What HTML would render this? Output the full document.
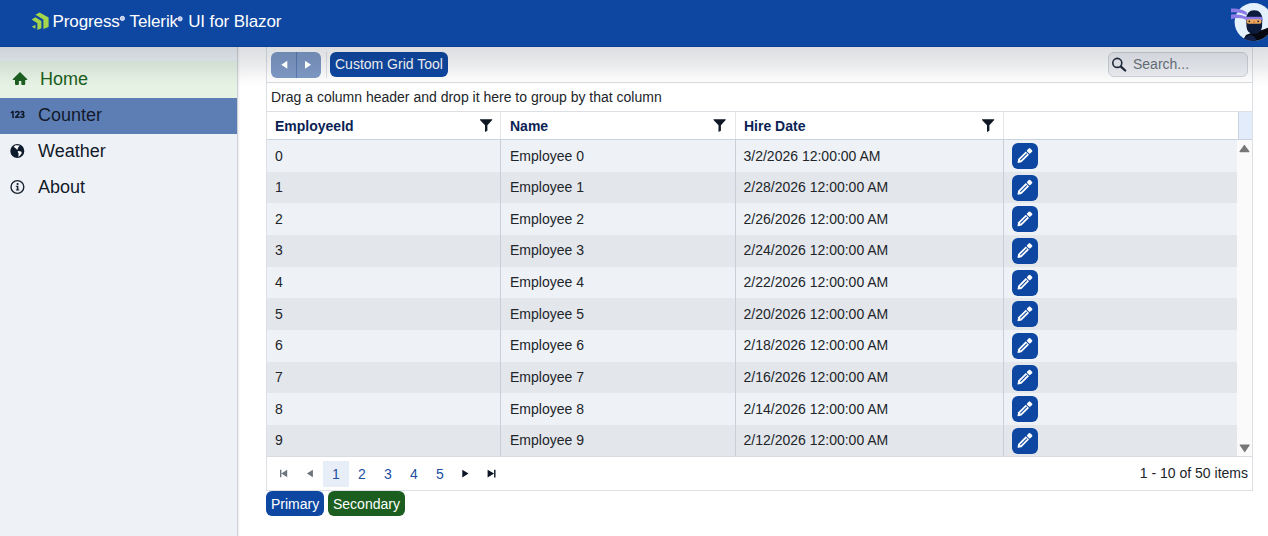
<!DOCTYPE html>
<html><head><meta charset="utf-8">
<style>
*{box-sizing:border-box;margin:0;padding:0}
html,body{width:1268px;height:536px;overflow:hidden;background:#fff;font-family:"Liberation Sans",sans-serif;font-size:14px;color:#212529}
#hdr{position:absolute;left:0;top:0;width:1268px;height:47px;background:#0e47a1;z-index:5;border-bottom:1px solid #0a3f94}
#hdr .logo{position:absolute;left:31px;top:12px;width:18px;height:19px}
#hdr .title{position:absolute;left:52.5px;top:12px;font-size:17px;line-height:20px;color:#fff;white-space:nowrap;letter-spacing:-0.1px}
#hdr .title sup{font-size:7.5px;vertical-align:top;position:relative;top:-1.5px;margin-left:0px;letter-spacing:0;color:transparent}
#avatar{position:absolute;left:1234px;top:3px;width:38px;height:38px;border-radius:50%;background:#dff0fb;overflow:hidden}
#shadow{position:absolute;left:0;top:47px;width:1268px;height:40px;background:linear-gradient(rgba(10,20,40,.14),rgba(10,20,40,.11) 10px,rgba(10,20,40,.075) 20px,rgba(10,20,40,.04) 28px,rgba(10,20,40,.015) 34px,rgba(10,20,40,0) 40px);z-index:4;pointer-events:none}
#side{position:absolute;left:0;top:47px;width:238px;height:489px;background:#eef2f7;border-right:1px solid #cdd1d7;box-shadow:1px 0 2px rgba(0,0,0,.07)}
.nav{position:absolute;left:0;width:237px;height:36px;font-size:18px;line-height:36px;color:#131a2a}
.nav .ic{position:absolute;left:11px;top:11px;width:16px;height:14px}
.nav span.t{position:absolute;left:38px;top:0}
#n-home{top:14px;height:37px;background:#e6f3e4;color:#1b5e20}
#n-home span.t{left:40px}
#n-counter span.t{top:-1px}
#n-counter{top:51px;background:#5d7eb5}
#n-weather{top:86px}
#n-about{top:122px}
#grid{position:absolute;left:266px;top:47px;width:987px;height:444px;border:1px solid #dcdfe4;border-top:none;background:#fff}
#tb{position:absolute;left:0;top:0;width:985px;height:36px;border-bottom:1px solid #dadde2}
.bgrp{position:absolute;left:4px;top:5px;width:50px;height:26px;border-radius:6px;background:#7f9ac7;overflow:hidden}
.bgrp .div{position:absolute;left:25px;top:0;width:1px;height:26px;background:#5a7ab0}
.sep{position:absolute;left:59px;top:5px;width:1px;height:26px;background:#e2e4e8}
.btn{position:absolute;height:25px;border-radius:6px;color:#fff;line-height:26px;padding:0 5px;white-space:nowrap}
#cgt{left:63px;top:5px;width:118px;background:#0e47a1;padding:0 4px 0 5px;line-height:25px}
#search{position:absolute;left:841px;top:5px;width:140px;height:25px;border:1px solid #cfd4da;border-radius:6px;background:#eef0f4;color:#6c757d;line-height:23px}
#search span{position:absolute;left:24px;top:0}
#grp{position:absolute;left:0;top:36px;width:985px;height:29px;border-bottom:1px solid #dcdfe4;line-height:27px;padding-left:4px;padding-top:1px;color:#212529}
#ghead{position:absolute;left:0;top:65px;width:985px;height:28px;border-bottom:1px solid #c9d3df;background:#fff}
.hc{position:absolute;top:0;height:27px;line-height:27px;padding-top:1px;font-weight:bold;color:#0b1f54;padding-left:8px;border-right:1px solid #e4e6ea}
.hc .f{position:absolute;top:7px;width:13px;height:13px}
#hsb{position:absolute;left:971px;top:0;width:14px;height:27px;background:#e2ecfa;border-left:1px solid #c9d3df}
#body{position:absolute;left:0;top:93px;width:970px;height:316px;overflow:hidden}
.row{position:absolute;left:0;width:970px;height:31.65px;background:#eef2f7}
.row.alt{background:#e3e6eb}
.c{position:absolute;top:0;height:100%;line-height:31.65px;padding-left:8px;padding-top:0.5px;border-right:1px solid #cacfd6}
.eb{position:absolute;left:8px;top:3px;width:26px;height:26px;border-radius:6px;background:#0e47a1}
#vsb{position:absolute;left:970px;top:93px;width:15px;height:316px;background:#fafafa}
#pager{position:absolute;left:0;top:409px;width:985px;height:34px;border-top:1px solid #d9dce1}
.pg{position:absolute;top:4px;height:26px;width:26px;text-align:center;line-height:26px;color:#1d4f9f}
.pg.sel{background:#e8eef7}
#pinfo{position:absolute;right:4px;top:0;line-height:33px;color:#212529}
#prim{left:266px;top:491px;width:58px;background:#0e47a1}
#sec{left:328px;top:491px;width:77px;background:#1b5e20}
</style></head><body>
<div id="hdr">
  
  <div class="title">Progress<sup>®</sup> Telerik<sup>®</sup> UI for Blazor</div>
  
</div>
<div id="shadow"></div>
<div id="side">
  <div class="nav" id="n-home"><span class="t">Home</span></div>
  <div class="nav" id="n-counter"><span class="t">Counter</span></div>
  <div class="nav" id="n-weather"><span class="t">Weather</span></div>
  <div class="nav" id="n-about"><span class="t">About</span></div>
</div>
<div id="grid">
  <div id="tb">
    <div class="bgrp"><div class="div"></div></div>
    <div class="sep"></div>
    <div class="btn" id="cgt">Custom Grid Tool</div>
    <div id="search"><span>Search...</span></div>
  </div>
  <div id="grp">Drag a column header and drop it here to group by that column</div>
  <div id="ghead">
    <div class="hc" style="left:0;width:234px">EmployeeId</div>
    <div class="hc" style="left:234px;width:235px;padding-left:9px">Name</div>
    <div class="hc" style="left:469px;width:268px">Hire Date</div>
    <div class="hc" style="left:737px;width:233px;border-right:none"></div>
    <div id="hsb"></div>
  </div>
  <div id="body">
<div class="row" style="top:0.00px"><div class="c" style="left:0;width:234px">0</div><div class="c" style="left:234px;width:235px;padding-left:9px">Employee 0</div><div class="c" style="left:469px;width:268px;padding-left:7.5px">3/2/2026 12:00:00 AM</div><div class="c" style="left:737px;width:233px;border-right:none"><div class="eb"></div></div></div>
<div class="row alt" style="top:31.65px"><div class="c" style="left:0;width:234px">1</div><div class="c" style="left:234px;width:235px;padding-left:9px">Employee 1</div><div class="c" style="left:469px;width:268px;padding-left:7.5px">2/28/2026 12:00:00 AM</div><div class="c" style="left:737px;width:233px;border-right:none"><div class="eb"></div></div></div>
<div class="row" style="top:63.30px"><div class="c" style="left:0;width:234px">2</div><div class="c" style="left:234px;width:235px;padding-left:9px">Employee 2</div><div class="c" style="left:469px;width:268px;padding-left:7.5px">2/26/2026 12:00:00 AM</div><div class="c" style="left:737px;width:233px;border-right:none"><div class="eb"></div></div></div>
<div class="row alt" style="top:94.95px"><div class="c" style="left:0;width:234px">3</div><div class="c" style="left:234px;width:235px;padding-left:9px">Employee 3</div><div class="c" style="left:469px;width:268px;padding-left:7.5px">2/24/2026 12:00:00 AM</div><div class="c" style="left:737px;width:233px;border-right:none"><div class="eb"></div></div></div>
<div class="row" style="top:126.60px"><div class="c" style="left:0;width:234px">4</div><div class="c" style="left:234px;width:235px;padding-left:9px">Employee 4</div><div class="c" style="left:469px;width:268px;padding-left:7.5px">2/22/2026 12:00:00 AM</div><div class="c" style="left:737px;width:233px;border-right:none"><div class="eb"></div></div></div>
<div class="row alt" style="top:158.25px"><div class="c" style="left:0;width:234px">5</div><div class="c" style="left:234px;width:235px;padding-left:9px">Employee 5</div><div class="c" style="left:469px;width:268px;padding-left:7.5px">2/20/2026 12:00:00 AM</div><div class="c" style="left:737px;width:233px;border-right:none"><div class="eb"></div></div></div>
<div class="row" style="top:189.90px"><div class="c" style="left:0;width:234px">6</div><div class="c" style="left:234px;width:235px;padding-left:9px">Employee 6</div><div class="c" style="left:469px;width:268px;padding-left:7.5px">2/18/2026 12:00:00 AM</div><div class="c" style="left:737px;width:233px;border-right:none"><div class="eb"></div></div></div>
<div class="row alt" style="top:221.55px"><div class="c" style="left:0;width:234px">7</div><div class="c" style="left:234px;width:235px;padding-left:9px">Employee 7</div><div class="c" style="left:469px;width:268px;padding-left:7.5px">2/16/2026 12:00:00 AM</div><div class="c" style="left:737px;width:233px;border-right:none"><div class="eb"></div></div></div>
<div class="row" style="top:253.20px"><div class="c" style="left:0;width:234px">8</div><div class="c" style="left:234px;width:235px;padding-left:9px">Employee 8</div><div class="c" style="left:469px;width:268px;padding-left:7.5px">2/14/2026 12:00:00 AM</div><div class="c" style="left:737px;width:233px;border-right:none"><div class="eb"></div></div></div>
<div class="row alt" style="top:284.85px"><div class="c" style="left:0;width:234px">9</div><div class="c" style="left:234px;width:235px;padding-left:9px">Employee 9</div><div class="c" style="left:469px;width:268px;padding-left:7.5px">2/12/2026 12:00:00 AM</div><div class="c" style="left:737px;width:233px;border-right:none"><div class="eb"></div></div></div>
</div>
  <div id="vsb"></div>
  <div id="pager">
    <div class="pg sel" style="left:56px">1</div>
    <div class="pg" style="left:82px">2</div>
    <div class="pg" style="left:108px">3</div>
    <div class="pg" style="left:134px">4</div>
    <div class="pg" style="left:160px">5</div>
    <div id="pinfo">1 - 10 of 50 items</div>
  </div>
</div>
<div class="btn" id="prim">Primary</div>
<div class="btn" id="sec">Secondary</div>

<svg id="ov" width="1268" height="536" viewBox="0 0 1268 536" style="position:absolute;left:0;top:0;z-index:10;pointer-events:none">
<defs><clipPath id="avc"><circle cx="1253.6" cy="22" r="19"/></clipPath></defs>
<circle cx="1253.6" cy="22" r="19" fill="#e3f2fc"/>
<g clip-path="url(#avc)">
<path fill="#05080f" d="M1240 45 L1246 35 Q1254 31 1262 30 L1270 27 L1270 45 Z"/>
<path fill="#14224a" d="M1241 45 Q1243 36.5 1250 35 Q1256 34.5 1257.5 45 Z"/>
</g>
<path fill="#8c7ae6" d="M1231 8.6 Q1240 7.8 1246.8 12.2 L1246.8 15.6 Q1240 11.6 1231 12.4 Z M1231 14.4 Q1240 13.4 1247 17 L1247 20.2 Q1240 16.6 1231 19.2 Z"/>
<path fill="#0c1a3c" d="M1246.2 20 Q1246.2 10.3 1254.2 10.3 Q1262.3 10.3 1262.3 20 L1262 27 Q1261 34 1254.2 34 Q1247.2 34 1246.5 27 Z"/>
<rect x="1246" y="16.8" width="16.5" height="3.4" fill="#8c7ae6"/>
<rect x="1246.6" y="19.3" width="14.9" height="4.4" rx="2" fill="#e9a85c"/>
<circle cx="1249.3" cy="21.3" r="0.9" fill="#1a1a2e"/><circle cx="1258.2" cy="21.3" r="0.9" fill="#1a1a2e"/>
<rect x="1253.5" y="21.2" width="1.2" height="2" fill="#d9603b"/>
<circle cx="122.4" cy="18.4" r="2.1" fill="#b9c6ea" stroke="#f4f6ff" stroke-width="0.9"/><circle cx="180.1" cy="18.8" r="2.1" fill="#b9c6ea" stroke="#f4f6ff" stroke-width="0.9"/>
<polygon fill="#a3d64a" points="35.4,14.8 39.6,12.4 48.6,17.5 48.6,26.9 43.4,28.9 43.4,19.5"/><polygon fill="#a3d64a" points="31.6,19.5 35.4,17.3 41.4,20.9 41.4,28.3 37.4,30.0 37.4,23.3"/><polygon fill="#a3d64a" points="31.8,26.7 35.4,24.7 35.4,28.7"/>
<path fill="#1b5e20" d="M20 72 L27.3 79.3 Q27.6 80 26.6 80 L25.2 80 L25.2 84 Q25.2 85 24.2 85 L22.3 85 Q21.3 85 21.3 84 L21.3 81 L18.9 81 L18.9 84 Q18.9 85 17.9 85 L16 85 Q15 85 15 84 L15 80 L13.4 80 Q12.4 80 12.7 79.3 Z"/>
<g fill="none" stroke="#0f1a2b" stroke-width="1.5" stroke-linejoin="round"><path d="M10.8 113 L13 111.4 L13 118"/><path d="M15.4 112.9 Q15.7 111.4 17.3 111.4 Q19 111.4 19 112.8 Q19 114 17.6 115.1 L15.6 117.3 L19.6 117.3"/><path d="M20.6 112.6 Q21 111.4 22.3 111.4 Q23.8 111.4 23.8 112.8 Q23.8 114.3 22 114.4 Q24 114.5 24 116 Q24 117.4 22.2 117.4 Q20.8 117.4 20.4 116.3"/></g>
<circle cx="17.3" cy="151" r="7" fill="#0d1a2b"/><path fill="#fff" d="M13.6 146.7 L15.5 145.3 L19.8 145.6 L18 147.8 L17.3 149.9 L15.9 148.6 Z M17.8 150.9 L21.2 151.4 L21.8 153 L20 155.4 L18.4 157 L18.6 153.6 L17.9 152.2 Z"/>
<circle cx="17.4" cy="187" r="6.4" fill="none" stroke="#1a2230" stroke-width="1.4"/><circle cx="17.6" cy="184" r="1.1" fill="#1a2230"/><path fill="#1a2230" d="M15.8 185.8 L18.4 185.8 L18.4 189.6 L19.3 189.6 L19.3 190.6 L15.9 190.6 L15.9 189.6 L16.8 189.6 L16.8 186.8 L15.8 186.8 Z"/>
<path fill="#fff" d="M281.3 64.7 L287.3 60.8 L287.3 68.7 Z M311 64.7 L305 60.8 L305 68.7 Z"/>
<circle cx="1117.3" cy="62.9" r="4.5" fill="none" stroke="#1f2937" stroke-width="1.6"/><path d="M1120.9 66.6 L1125.2 70.5" stroke="#1f2937" stroke-width="2.3" stroke-linecap="round"/>
<path fill="#0f1724" transform="translate(480.0 119.2)" d="M0 0 L12.2 0 L12.2 0.9 L7.4 6 L7.4 11.5 L5 12.8 L5 6 L0 0.9 Z"/><path fill="#0f1724" transform="translate(713.5 119.2)" d="M0 0 L12.2 0 L12.2 0.9 L7.4 6 L7.4 11.5 L5 12.8 L5 6 L0 0.9 Z"/><path fill="#0f1724" transform="translate(982.0 119.2)" d="M0 0 L12.2 0 L12.2 0.9 L7.4 6 L7.4 11.5 L5 12.8 L5 6 L0 0.9 Z"/>
<g transform="translate(1024.5 156.00) rotate(-45)"><path fill="#fff" d="M-9.6 0.3 L-9.6 -0.3 L-6.6 -2.3 L4.1 -2.3 L4.1 2.3 L-6.6 2.3 Z"/><rect x="-5.9" y="-0.55" width="9.2" height="1.1" fill="#0e47a1"/><rect x="5.1" y="-2.3" width="4.3" height="4.6" rx="1" fill="#fff"/></g><g transform="translate(1024.5 187.65) rotate(-45)"><path fill="#fff" d="M-9.6 0.3 L-9.6 -0.3 L-6.6 -2.3 L4.1 -2.3 L4.1 2.3 L-6.6 2.3 Z"/><rect x="-5.9" y="-0.55" width="9.2" height="1.1" fill="#0e47a1"/><rect x="5.1" y="-2.3" width="4.3" height="4.6" rx="1" fill="#fff"/></g><g transform="translate(1024.5 219.30) rotate(-45)"><path fill="#fff" d="M-9.6 0.3 L-9.6 -0.3 L-6.6 -2.3 L4.1 -2.3 L4.1 2.3 L-6.6 2.3 Z"/><rect x="-5.9" y="-0.55" width="9.2" height="1.1" fill="#0e47a1"/><rect x="5.1" y="-2.3" width="4.3" height="4.6" rx="1" fill="#fff"/></g><g transform="translate(1024.5 250.95) rotate(-45)"><path fill="#fff" d="M-9.6 0.3 L-9.6 -0.3 L-6.6 -2.3 L4.1 -2.3 L4.1 2.3 L-6.6 2.3 Z"/><rect x="-5.9" y="-0.55" width="9.2" height="1.1" fill="#0e47a1"/><rect x="5.1" y="-2.3" width="4.3" height="4.6" rx="1" fill="#fff"/></g><g transform="translate(1024.5 282.60) rotate(-45)"><path fill="#fff" d="M-9.6 0.3 L-9.6 -0.3 L-6.6 -2.3 L4.1 -2.3 L4.1 2.3 L-6.6 2.3 Z"/><rect x="-5.9" y="-0.55" width="9.2" height="1.1" fill="#0e47a1"/><rect x="5.1" y="-2.3" width="4.3" height="4.6" rx="1" fill="#fff"/></g><g transform="translate(1024.5 314.25) rotate(-45)"><path fill="#fff" d="M-9.6 0.3 L-9.6 -0.3 L-6.6 -2.3 L4.1 -2.3 L4.1 2.3 L-6.6 2.3 Z"/><rect x="-5.9" y="-0.55" width="9.2" height="1.1" fill="#0e47a1"/><rect x="5.1" y="-2.3" width="4.3" height="4.6" rx="1" fill="#fff"/></g><g transform="translate(1024.5 345.90) rotate(-45)"><path fill="#fff" d="M-9.6 0.3 L-9.6 -0.3 L-6.6 -2.3 L4.1 -2.3 L4.1 2.3 L-6.6 2.3 Z"/><rect x="-5.9" y="-0.55" width="9.2" height="1.1" fill="#0e47a1"/><rect x="5.1" y="-2.3" width="4.3" height="4.6" rx="1" fill="#fff"/></g><g transform="translate(1024.5 377.55) rotate(-45)"><path fill="#fff" d="M-9.6 0.3 L-9.6 -0.3 L-6.6 -2.3 L4.1 -2.3 L4.1 2.3 L-6.6 2.3 Z"/><rect x="-5.9" y="-0.55" width="9.2" height="1.1" fill="#0e47a1"/><rect x="5.1" y="-2.3" width="4.3" height="4.6" rx="1" fill="#fff"/></g><g transform="translate(1024.5 409.20) rotate(-45)"><path fill="#fff" d="M-9.6 0.3 L-9.6 -0.3 L-6.6 -2.3 L4.1 -2.3 L4.1 2.3 L-6.6 2.3 Z"/><rect x="-5.9" y="-0.55" width="9.2" height="1.1" fill="#0e47a1"/><rect x="5.1" y="-2.3" width="4.3" height="4.6" rx="1" fill="#fff"/></g><g transform="translate(1024.5 440.85) rotate(-45)"><path fill="#fff" d="M-9.6 0.3 L-9.6 -0.3 L-6.6 -2.3 L4.1 -2.3 L4.1 2.3 L-6.6 2.3 Z"/><rect x="-5.9" y="-0.55" width="9.2" height="1.1" fill="#0e47a1"/><rect x="5.1" y="-2.3" width="4.3" height="4.6" rx="1" fill="#fff"/></g>
<path fill="#777" stroke="#777" stroke-width="1.2" stroke-linejoin="round" d="M1244.4 145.5 L1248.8 151.6 L1240 151.6 Z M1244.7 451.5 L1249.2 445 L1240.2 445 Z"/>
<path fill="#6c757d" d="M280 469.7 L281.4 469.7 L281.4 477.3 L280 477.3 Z M281.4 473.5 L287.2 469.7 L287.2 477.3 Z M306.9 473.5 L312.9 469.7 L312.9 477.3 Z"/><path fill="#0b1526" d="M462.3 469.7 L468.5 473.6 L462.3 477.5 Z M487.6 469.7 L494.1 473.6 L487.6 477.5 Z M494.1 469.7 L495.5 469.7 L495.5 477.5 L494.1 477.5 Z"/>
</svg>
</body></html>
